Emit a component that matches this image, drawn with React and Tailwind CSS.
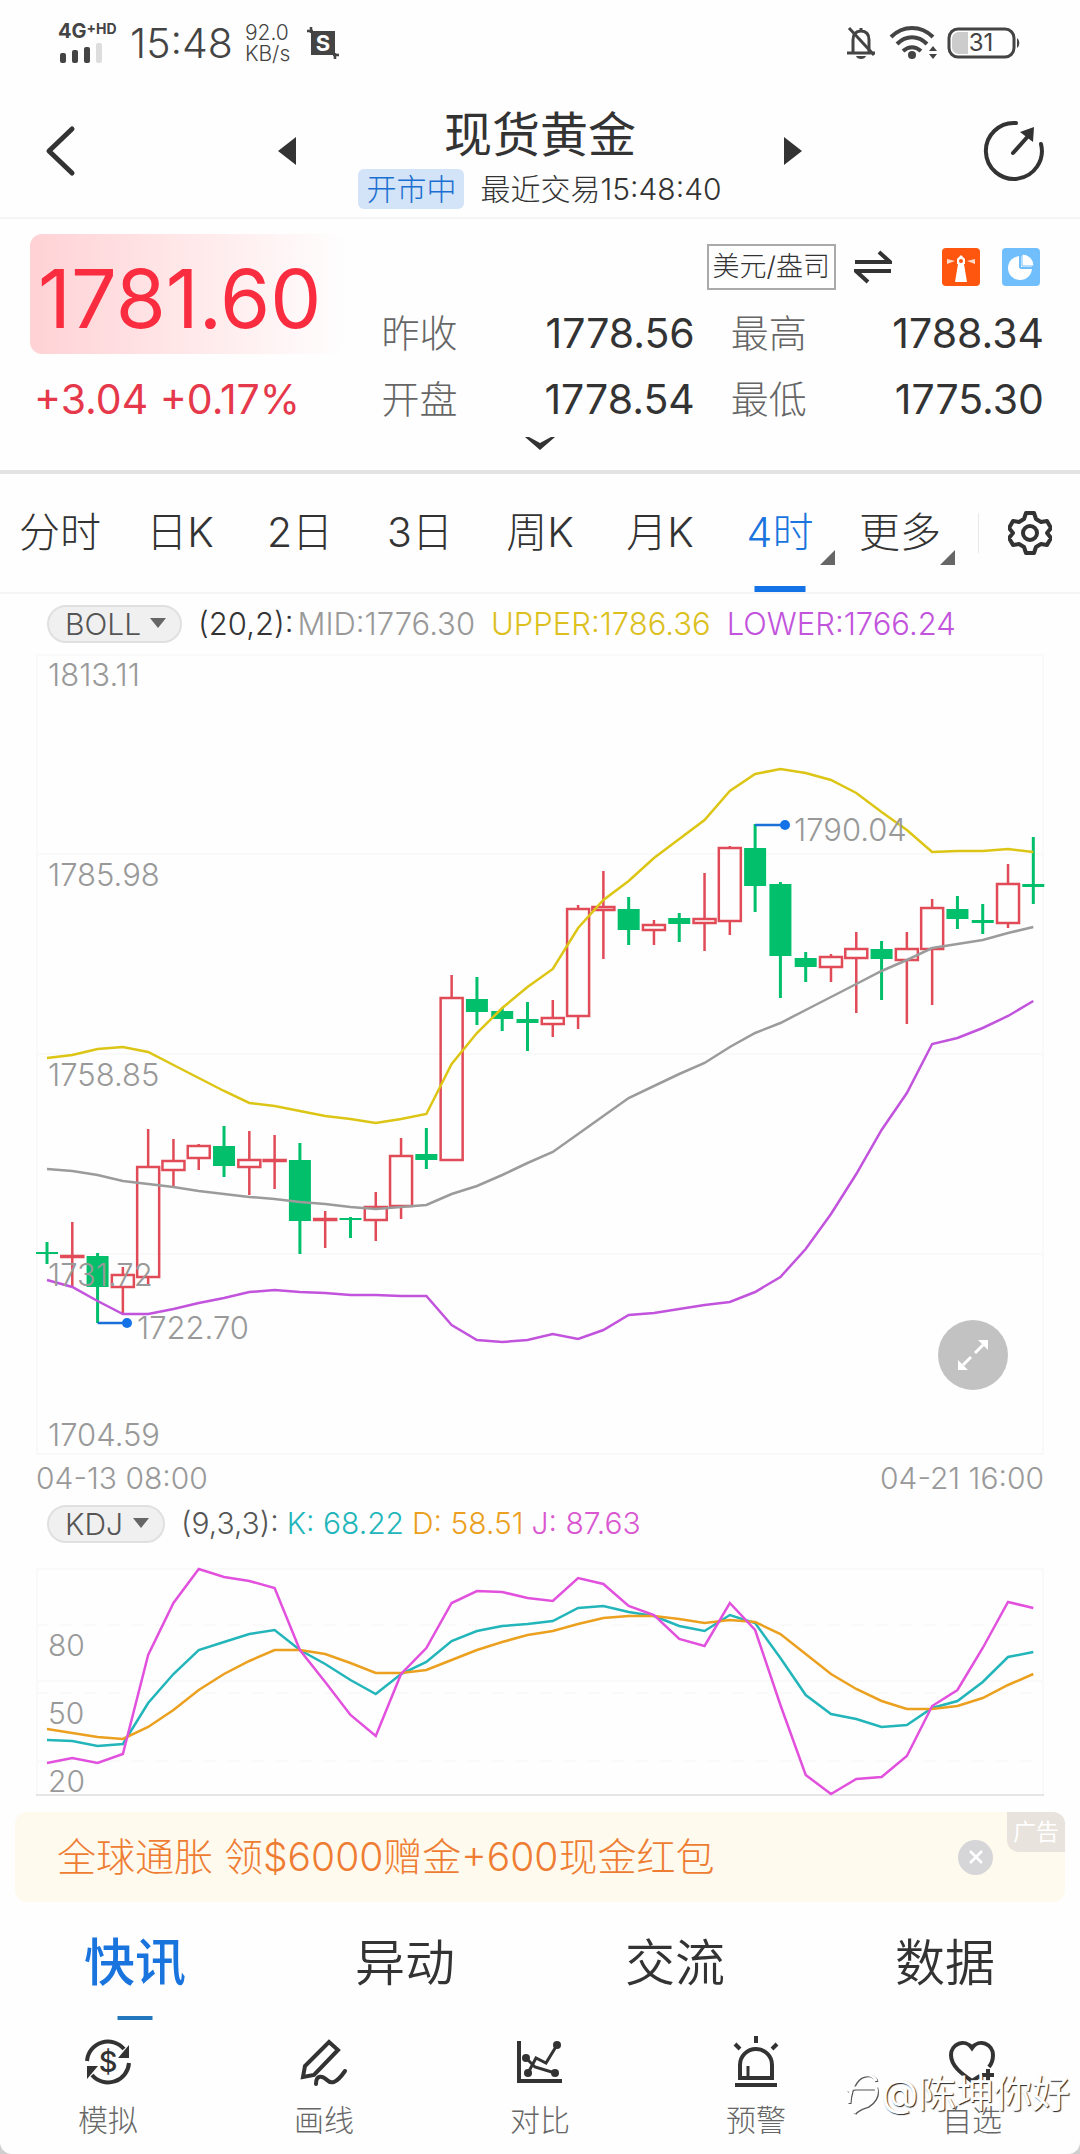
import { useState } from 'react'

const periods = ['分时', '日K', '2日', '3日', '周K', '月K', '4时', '更多']
const sections = ['快讯', '异动', '交流', '数据']

// [up, high, low, bodyTop, bodyBottom]
const candles = [
  [0, 1242, 1264, 1252, 1254], [1, 1222, 1287, 1256, 1257], [0, 1253, 1323, 1256, 1287],
  [1, 1267, 1315, 1275, 1287], [1, 1129, 1285, 1167, 1277], [1, 1139, 1187, 1161, 1170],
  [1, 1144, 1170, 1146, 1158], [0, 1126, 1177, 1146, 1166], [1, 1131, 1195, 1160, 1167],
  [1, 1135, 1189, 1160, 1161], [0, 1143, 1254, 1160, 1221], [1, 1211, 1248, 1219, 1220],
  [0, 1217, 1238, 1218, 1220], [1, 1192, 1241, 1207, 1220], [1, 1138, 1219, 1156, 1206],
  [0, 1128, 1169, 1154, 1160], [1, 975, 1160, 998, 1160], [0, 977, 1025, 999, 1012],
  [0, 1008, 1031, 1011, 1019], [0, 1002, 1051, 1019, 1023], [1, 1000, 1037, 1018, 1024],
  [1, 905, 1029, 909, 1016], [1, 871, 959, 907, 910], [0, 897, 945, 909, 930],
  [1, 920, 945, 925, 930], [0, 913, 942, 918, 924], [1, 873, 951, 919, 923],
  [1, 846, 935, 848, 921], [0, 824, 912, 848, 886], [0, 882, 998, 884, 956],
  [0, 952, 982, 958, 967], [1, 954, 982, 957, 967], [1, 932, 1013, 949, 958],
  [0, 941, 1000, 949, 959], [1, 932, 1024, 949, 960], [1, 899, 1005, 908, 949],
  [0, 896, 929, 909, 919], [0, 904, 934, 920, 923], [1, 864, 928, 884, 923],
  [0, 837, 904, 884, 887],
]

const upper = [1058, 1055, 1049, 1047, 1052, 1065, 1078, 1091, 1103, 1106, 1111, 1116, 1119, 1123, 1119, 1114, 1064, 1033, 1008, 987, 969, 928, 900, 881, 858, 839, 820, 791, 774, 769, 773, 780, 793, 812, 830, 852, 851, 851, 849, 852]
const mid = [1169, 1171, 1175, 1181, 1184, 1187, 1191, 1194, 1197, 1199, 1202, 1204, 1207, 1209, 1207, 1205, 1194, 1186, 1175, 1163, 1152, 1134, 1116, 1098, 1086, 1074, 1063, 1047, 1033, 1023, 1010, 997, 984, 971, 960, 948, 944, 940, 933, 927]
const lower = [1280, 1287, 1301, 1314, 1314, 1309, 1303, 1298, 1292, 1290, 1292, 1293, 1295, 1295, 1296, 1296, 1325, 1340, 1342, 1340, 1334, 1339, 1330, 1315, 1313, 1309, 1305, 1302, 1292, 1277, 1249, 1214, 1174, 1130, 1093, 1044, 1038, 1028, 1016, 1001]

const kLine = [1740, 1741, 1746, 1744, 1703, 1674, 1650, 1642, 1634, 1630, 1650, 1664, 1680, 1694, 1674, 1662, 1641, 1631, 1626, 1624, 1621, 1608, 1606, 1612, 1616, 1626, 1631, 1615, 1623, 1658, 1695, 1714, 1719, 1727, 1725, 1708, 1701, 1682, 1657, 1652]
const dLine = [1729, 1733, 1737, 1739, 1727, 1710, 1690, 1674, 1661, 1650, 1650, 1654, 1663, 1673, 1673, 1670, 1660, 1650, 1642, 1635, 1631, 1624, 1618, 1616, 1616, 1619, 1623, 1620, 1622, 1634, 1654, 1674, 1689, 1701, 1709, 1709, 1706, 1698, 1685, 1674]
const jLine = [1763, 1758, 1763, 1754, 1655, 1603, 1569, 1577, 1581, 1588, 1650, 1682, 1715, 1736, 1674, 1648, 1603, 1591, 1592, 1598, 1601, 1578, 1584, 1606, 1615, 1639, 1646, 1603, 1630, 1705, 1775, 1794, 1779, 1777, 1756, 1706, 1690, 1648, 1602, 1608]

const xAt = (i) => 47 + i * 25.29
const toPoints = (values) => values.map((y, i) => `${xAt(i)},${y}`).join(' ')

function StatusBar() {
  return (
    <div className="flex h-[85px] items-center justify-between pr-[60px] pl-[58px] text-[#444]">
      <div className="flex items-center">
        <div className="flex w-[60px] flex-col gap-1">
          <div className="flex items-start text-[20px] leading-4 font-bold">
            <span>4G</span>
            <span className="text-[14px] leading-3">+HD</span>
          </div>
          <svg width="46" height="20" viewBox="0 0 46 20" fill="#444">
            <rect x="2" y="10" width="6" height="10" rx="2" />
            <rect x="14" y="7" width="6" height="13" rx="2" />
            <rect x="26" y="4" width="6" height="16" rx="2" />
            <rect x="38" y="0" width="6" height="20" rx="2" fill="#ddd" />
          </svg>
        </div>
        <span className="ml-3 text-[41px] leading-[44px] font-light">15:48</span>
        <div className="ml-3 text-[21px] leading-[21px] font-light">
          <div>92.0</div>
          <div>KB/s</div>
        </div>
        <svg className="ml-4" width="34" height="34" viewBox="0 0 34 34">
          <path d="M5 5h24v24H5z" fill="#444" />
          <path d="M1 5h6M5 1v6M27 29h6M29 27v6" stroke="#444" strokeWidth="2.5" />
          <text x="17" y="25" textAnchor="middle" fill="#fefefe" fontSize="22" fontWeight="700">S</text>
        </svg>
      </div>
      <div className="flex items-center gap-[10px]">
        <svg width="36" height="36" viewBox="0 0 36 36" fill="none" stroke="#444" strokeWidth="3">
          <path d="M10 27V15c0-6 3-9 8-9s8 3 8 9v12" />
          <path d="M4 28h28M18 3v3M6 3l25 27" />
          <path d="M13 31c1 4 9 4 10 0z" fill="#444" stroke="none" />
        </svg>
        <svg width="48" height="36" viewBox="0 0 48 36" fill="none" stroke="#444" strokeWidth="4">
          <path d="M2 12c12-12 30-12 42 0M8 19c9-9 21-9 30 0M14 26c6-5 12-5 18 0" />
          <circle cx="23" cy="30" r="4" fill="#444" stroke="none" />
          <path d="M40 26l4-5 4 5zM40 29l4 5 4-5z" fill="#444" stroke="none" />
        </svg>
        <svg width="73" height="32" viewBox="0 0 73 32">
          <rect x="2" y="2" width="65" height="28" rx="9" fill="none" stroke="#444" strokeWidth="3" />
          <path d="M12 5h9v22h-9c-4 0-7-3-7-7v-8c0-4 3-7 7-7z" fill="#ccc" />
          <path d="M70 11c3 2 3 8 0 10z" fill="#444" />
          <text x="34" y="24" textAnchor="middle" fill="#444" fontSize="24">31</text>
        </svg>
      </div>
    </div>
  )
}

function Header() {
  return (
    <header className="grid grid-cols-[1fr_auto_1fr] items-center border-b-2 border-[#f4f4f4] text-[#333]">
      <div className="flex items-center justify-between pr-[62px] pl-11">
        <button aria-label="返回">
          <svg width="32" height="52" viewBox="0 0 32 52" fill="none" stroke="#333" strokeWidth="5" strokeLinecap="round" strokeLinejoin="round">
            <path d="M28 4L5 26l23 22" />
          </svg>
        </button>
        <button aria-label="上一个">
          <svg width="18" height="28" viewBox="0 0 18 28" fill="#333"><path d="M18 0v28L0 14z" /></svg>
        </button>
      </div>
      <div className="flex flex-col items-center gap-1 pt-5 pb-2">
        <h1 className="text-[48px] leading-[60px]">现货黄金</h1>
        <div className="flex items-center gap-4 text-[30px] leading-10">
          <span className="rounded-md bg-[#d3e3f8] px-2 font-light text-[#1a6fd0]">开市中</span>
          <span className="font-light">最近交易15:48:40</span>
        </div>
      </div>
      <div className="flex items-center justify-between pr-[34px] pl-[62px]">
        <button aria-label="下一个">
          <svg width="18" height="28" viewBox="0 0 18 28" fill="#333"><path d="M0 0v28l18-14z" /></svg>
        </button>
        <button aria-label="刷新">
          <svg width="64" height="64" viewBox="0 0 64 64" fill="none" stroke="#333" strokeWidth="4" strokeLinecap="round">
            <path d="M34 4A28 28 0 1 0 59 25" />
            <path d="M31 34L48 15" />
            <path d="M38 13l14-5-1 15z" fill="#333" stroke="none" />
          </svg>
        </button>
      </div>
    </header>
  )
}

function Stat({ label, value }) {
  return (
    <div className="flex items-center justify-between">
      <dt className="text-[38px] font-light text-[#666]">{label}</dt>
      <dd className="text-[41px] text-[#333]">{value}</dd>
    </div>
  )
}

function Quote() {
  return (
    <section className="border-b-4 border-[#e4e4e4] pt-[15px] pb-5">
      <div className="flex">
        <div className="w-[32%] pl-[30px]">
          <div className="flex h-[120px] items-center rounded-xl bg-linear-to-r from-[#ffd2d5] to-[#fefefe] pt-3 pl-2 text-[81px] text-[#fa2c3f]">
            1781.60
          </div>
          <div className="mt-5 pl-1 text-[41px] leading-[50px] whitespace-nowrap text-[#e5384a]">+3.04 +0.17%</div>
        </div>
        <div className="flex-1 pr-9 pl-9">
          <div className="flex h-[66px] items-center justify-end pr-1">
            <span className="border-2 border-[#aaa] px-1 text-[27px] leading-[42px] font-light text-[#333]">美元/盎司</span>
            <button className="ml-[18px]" aria-label="切换单位">
              <svg width="38" height="34" viewBox="0 0 38 34" fill="none" stroke="#333" strokeWidth="4">
                <path d="M1 12h35L25 2M37 21H2l12 11" />
              </svg>
            </button>
            <button className="ml-[50px]" aria-label="灯塔">
              <svg width="38" height="38" viewBox="0 0 38 38">
                <rect width="38" height="38" rx="4" fill="#ff560f" />
                <path d="M19 7l4 4v5h-1l3 18H13l3-18h-1v-5z" fill="#fff" />
                <path d="M5 11l8 2-8 3zM33 11l-8 2 8 3z" fill="#ffd9c8" />
                <circle cx="19" cy="13" r="2" fill="#ff560f" />
              </svg>
            </button>
            <button className="ml-[22px]" aria-label="持仓比例">
              <svg width="38" height="38" viewBox="0 0 38 38">
                <rect width="38" height="38" rx="4" fill="#70bffc" />
                <circle cx="18" cy="20" r="12" fill="#fff" />
                <path d="M18 20V6M18 20h14" stroke="#70bffc" strokeWidth="2" />
                <path d="M20 6a12 12 0 0 1 12 12H20z" fill="#fff" stroke="#70bffc" strokeWidth="1" />
              </svg>
            </button>
          </div>
          <dl className="grid grid-cols-2 gap-x-9 leading-[66px]">
            <Stat label="昨收" value="1778.56" />
            <Stat label="最高" value="1788.34" />
            <Stat label="开盘" value="1778.54" />
            <Stat label="最低" value="1775.30" />
          </dl>
        </div>
      </div>
      <button className="mx-auto mt-1 block" aria-label="展开">
        <svg width="30" height="14" viewBox="0 0 30 14" fill="#333"><path d="M0 1h4l11 6 11-6h4L15 14z" /></svg>
      </button>
    </section>
  )
}

function PeriodTabs() {
  const [active, setActive] = useState('4时')
  return (
    <nav className="grid h-[120px] grid-cols-9 border-b-2 border-[#f3f4f5]">
      {periods.map((p) => (
        <button
          key={p}
          onClick={() => setActive(p)}
          className={`relative text-[41px] font-light ${p === active ? 'text-[#1a74de]' : 'text-[#333]'}`}
        >
          {p}
          {(p === '4时' || p === '更多') && (
            <svg className="absolute right-[5px] bottom-[27px]" width="15" height="15" viewBox="0 0 15 15" fill="#666">
              <path d="M15 0v15H0z" />
            </svg>
          )}
          {p === active && <span className="absolute bottom-0 left-1/2 h-[6px] w-[51px] -translate-x-1/2 bg-[#1373e6]" />}
        </button>
      ))}
      <div className="flex items-center pl-[18px]">
        <span className="h-10 w-px bg-[#e8e8e8]" />
        <button className="mx-auto" aria-label="设置">
          <svg width="44" height="46" viewBox="0 0 44 46" fill="none" stroke="#333" strokeWidth="4" strokeLinejoin="round">
            <path d="M18 3h8l2 6 5 3 6-1 4 7-4 5 4 5-4 7-6-1-5 3-2 6h-8l-2-6-5-3-6 1-4-7 4-5-4-5 4-7 6 1 5-3z" />
            <circle cx="22" cy="23" r="7" />
          </svg>
        </button>
      </div>
    </nav>
  )
}

function IndicatorSelect({ label, options, className }) {
  return (
    <div className={`relative ${className}`}>
      <select
        aria-label={label}
        className="block h-[38px] w-full appearance-none rounded-full border-2 border-[#e0e0e0] bg-[#f0f0f0] pl-4 text-[30px] leading-[34px] font-light text-[#555]"
      >
        {options.map((o) => <option key={o}>{o}</option>)}
      </select>
      <svg className="pointer-events-none absolute top-3 right-4" width="16" height="12" viewBox="0 0 16 12" fill="#666">
        <path d="M0 1h16L8 11z" />
      </svg>
    </div>
  )
}

function CandleChart() {
  return (
    <div className="relative">
      <svg className="block w-full overflow-visible" viewBox="36 654 1008 800" fill="none">
        <g stroke="#f9f9f9" strokeWidth="2">
          <rect x="37" y="655" width="1006" height="799" />
          <path d="M36 854h1008M36 1054h1008M36 1254h1008" />
        </g>
        {candles.map(([up, high, low, top, bottom], i) => {
          const x = xAt(i)
          return up ? (
            <g key={i} stroke="#e04b57" strokeWidth="2.5">
              <path d={`M${x} ${high}V${top}M${x} ${bottom}V${low}`} />
              <rect x={x - 11} y={top} width="22" height={bottom - top} />
            </g>
          ) : (
            <g key={i} fill="#02bf6b">
              <rect x={x - 1.5} y={high} width="3" height={low - high} />
              <rect x={x - 11} y={top} width="22" height={bottom - top} />
            </g>
          )
        })}
        <g strokeWidth="2.5">
          <polyline points={toPoints(upper)} stroke="#dcc514" />
          <polyline points={toPoints(mid)} stroke="#9b9b9b" />
          <polyline points={toPoints(lower)} stroke="#c253dc" />
          <path d={`M${xAt(2)} 1323h30M${xAt(28)} 825h30`} stroke="#1a6fd8" />
        </g>
        <g fill="#1373e6">
          <circle cx="127" cy="1323" r="5" />
          <circle cx="785" cy="825" r="5" />
        </g>
        <g fill="#999" fontSize="31" fontWeight="300">
          <text x="48" y="686">1813.11</text>
          <text x="48" y="886">1785.98</text>
          <text x="48" y="1086">1758.85</text>
          <text x="48" y="1286">1731.72</text>
          <text x="48" y="1446">1704.59</text>
          <text x="137" y="1339">1722.70</text>
          <text x="794" y="841">1790.04</text>
        </g>
      </svg>
      <button aria-label="全屏" className="absolute right-9 bottom-16 flex size-[70px] items-center justify-center rounded-full bg-[#c2c2c2]">
        <svg width="32" height="32" viewBox="0 0 32 32" fill="#fff" stroke="#fff" strokeWidth="3">
          <path d="M18 14l8-8M14 18l-8 8" />
          <path d="M21 1h10v10zM1 21v10h10z" stroke="none" />
        </svg>
      </button>
    </div>
  )
}

function KdjChart() {
  return (
    <svg className="block w-full overflow-visible" viewBox="36 1569 1008 227" fill="none">
      <g stroke="#f9f9f9" strokeWidth="2">
        <path d="M37 1795V1569H1043V1795M36 1681H1044" />
        <path d="M36 1625H1044M36 1693H1044M36 1761H1044" strokeDasharray="12 12" />
      </g>
      <path d="M36 1795h1008" stroke="#e5e5e5" strokeWidth="2" />
      <g fill="#999" fontSize="30" fontWeight="300">
        <text x="48" y="1656">80</text>
        <text x="48" y="1724">50</text>
        <text x="48" y="1792">20</text>
      </g>
      <g strokeWidth="2.5">
        <polyline points={toPoints(kLine)} stroke="#22b5ba" />
        <polyline points={toPoints(dLine)} stroke="#eba01f" />
        <polyline points={toPoints(jLine)} stroke="#e251dd" />
      </g>
    </svg>
  )
}

function AdBanner() {
  return (
    <aside className="relative mx-[15px] mt-4 flex h-[90px] items-center justify-between rounded-xl bg-[#fffaee] pr-[72px] pl-[42px]">
      <a href="#ad" className="text-[39px] font-light text-[#ee7d33]">全球通胀 领$6000赠金+600现金红包</a>
      <button aria-label="关闭" className="flex size-[35px] items-center justify-center rounded-full bg-[#d6d6d8]">
        <svg width="14" height="14" viewBox="0 0 14 14" stroke="#fff" strokeWidth="2.5"><path d="M1 1l12 12M13 1L1 13" /></svg>
      </button>
      <span className="absolute top-0 right-0 rounded-tr-xl rounded-bl-xl bg-[#e8e3dc] px-[6px] text-[23px] leading-10 text-white">广告</span>
    </aside>
  )
}

function SectionTabs() {
  const [active, setActive] = useState('快讯')
  return (
    <nav className="grid h-[118px] grid-cols-4">
      {sections.map((s) => (
        <button
          key={s}
          onClick={() => setActive(s)}
          className={`relative pt-1 ${s === active ? 'text-[51px] font-medium text-[#1a74de]' : 'text-[50px] font-[350] text-[#333]'}`}
        >
          {s}
          {s === active && <span className="absolute bottom-0 left-1/2 h-1 w-[35px] -translate-x-1/2 bg-[#2377bd]" />}
        </button>
      ))}
    </nav>
  )
}

const actions = [
  {
    label: '模拟',
    icon: (
      <>
        <path d="M3 23A21 21 0 0 1 40 11M45 25A21 21 0 0 1 8 37" />
        <path d="M45 7v13H34zM3 41V28h11z" fill="#333" stroke="none" />
        <text x="24" y="34" textAnchor="middle" fontSize="29" fontWeight="500" fill="#333" stroke="none">$</text>
      </>
    ),
  },
  {
    label: '画线',
    icon: (
      <>
        <path d="M29 4l9 8-24 25-11 2 2-11z" />
        <path d="M16 46c0-10 7-8 11-4s9 4 18-9" strokeLinecap="round" />
      </>
    ),
  },
  {
    label: '对比',
    icon: (
      <>
        <path d="M3 3v40h43" />
        <path d="M12 35l8-15 10 5L41 7M10 20l9 9 20 6" strokeWidth="3" />
        <g fill="#333" stroke="none">
          <circle cx="12" cy="35" r="4" /><circle cx="10" cy="20" r="4" />
          <circle cx="41" cy="7" r="4" /><circle cx="39" cy="35" r="4" />
        </g>
      </>
    ),
  },
  {
    label: '预警',
    icon: (
      <>
        <path d="M8 40V27a16 16 0 0 1 32 0v13zM3 47h42M24-2v7M3 6l5 5M45 6l-5 5" />
        <path d="M16 39V28" strokeWidth="3" />
      </>
    ),
  },
  {
    label: '自选',
    icon: (
      <>
        <path d="M32 38l-8 5C14 36 3 28 3 17 3 6 17 0 24 10 31 0 45 6 45 17q0 7-4 12" />
        <path d="M34 37h12M40 31v12" />
      </>
    ),
  },
]

function BottomBar() {
  return (
    <div className="bg-[#cfcfcf]">
      <nav className="relative grid grid-cols-5 rounded-b-xl bg-[#fefefe] pt-[18px] pb-[14px]">
        {actions.map(({ label, icon }) => (
          <button key={label} className="flex flex-col items-center gap-[14px] text-[30px] leading-10 font-light text-[#666]">
            <svg className="overflow-visible" width="48" height="48" viewBox="0 0 48 48" fill="none" stroke="#333" strokeWidth="4">
              {icon}
            </svg>
            {label}
          </button>
        ))}
        <div className="pointer-events-none absolute top-12 right-[10px] flex items-center gap-px">
          <svg width="34" height="44" viewBox="0 0 34 44" fill="none" strokeWidth="3">
            <path stroke="#555" d="M3 32C4 14 12 2 24 4q5 2 6 6M1 20q3-3 8-3h21c2 8-3 14-8 17-8 3-12 4-14 8" transform="translate(1 1)" />
            <path stroke="#fefefe" d="M3 32C4 14 12 2 24 4q5 2 6 6M1 20q3-3 8-3h21c2 8-3 14-8 17-8 3-12 4-14 8" />
          </svg>
          <span className="text-[38px] leading-[50px] text-white [text-shadow:1px_1px_1px_#222]">@陈坤你好</span>
        </div>
      </nav>
    </div>
  )
}

export default function App() {
  return (
    <div className="min-h-screen bg-[#fefefe] font-['Inter','Noto_Sans_CJK_SC',sans-serif]">
      <StatusBar />
      <Header />
      <Quote />
      <PeriodTabs />
      <main className="px-9">
        <div className="flex h-[60px] items-center pl-[11px] text-[31px] font-light whitespace-nowrap">
          <IndicatorSelect label="主图指标" options={['BOLL', 'MA']} className="w-[135px]" />
          <span className="ml-4 text-[#333]">(20,2):</span>
          <span className="ml-1 text-[#999]">MID:1776.30</span>
          <span className="ml-4 text-[#dcc01e]">UPPER:1786.36</span>
          <span className="ml-4 text-[#c253dc]">LOWER:1766.24</span>
        </div>
        <CandleChart />
        <div className="flex justify-between text-[30px] leading-[48px] font-light text-[#999]">
          <span>04-13 08:00</span>
          <span>04-21 16:00</span>
        </div>
        <div className="mb-6 flex h-[43px] items-center pl-[11px] text-[30px] font-light whitespace-nowrap">
          <IndicatorSelect label="副图指标" options={['KDJ', 'MACD']} className="w-[118px]" />
          <span className="ml-4 text-[#555]">(9,3,3):</span>
          <span className="ml-2 text-[#22b5ba]">K: 68.22</span>
          <span className="ml-2 text-[#eba01f]">D: 58.51</span>
          <span className="ml-2 text-[#d957d0]">J: 87.63</span>
        </div>
        <KdjChart />
      </main>
      <AdBanner />
      <SectionTabs />
      <BottomBar />
    </div>
  )
}
